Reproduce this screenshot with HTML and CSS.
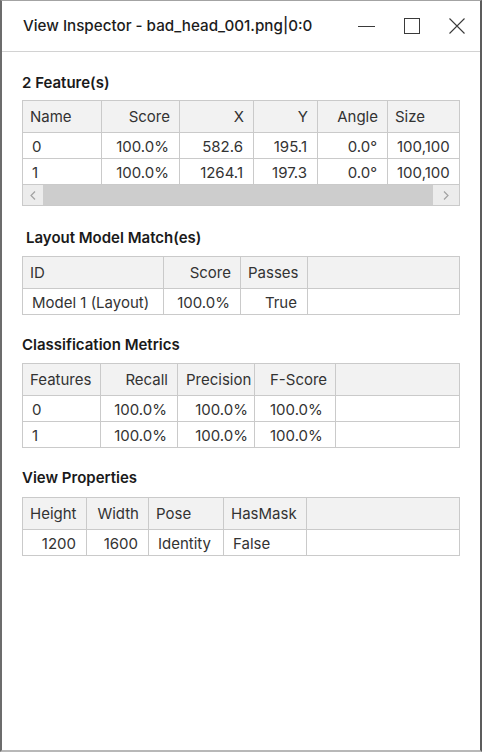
FILE: index.html
```html
<!DOCTYPE html>
<html lang="en">
<head>
<meta charset="utf-8">
<title>View Inspector</title>
<link rel="stylesheet" href="styles.css">
</head>
<body>
<div class="window">
  <header class="titlebar">
    <div class="title">View Inspector - bad_head_001.png|0:0</div>
    <div class="caption">
      <span class="cap-btn">
        <svg width="17" height="16" viewBox="0 0 17 16"><path d="M0 8.5H17" stroke="#3a3a3a" stroke-width="1" fill="none"/></svg>
      </span>
      <span class="cap-btn">
        <svg width="16" height="16" viewBox="0 0 16 16"><rect x="0.5" y="0.5" width="15" height="15" stroke="#3a3a3a" stroke-width="1" fill="none"/></svg>
      </span>
      <span class="cap-btn">
        <svg width="16" height="16" viewBox="0 0 16 16"><path d="M0.5 0.5L15.5 15.5M15.5 0.5L0.5 15.5" stroke="#3a3a3a" stroke-width="1.1" fill="none"/></svg>
      </span>
    </div>
  </header>

  <main class="content">
    <section class="section s-features">
      <h2 class="heading">2 Feature(s)</h2>
      <div class="table-wrap">
        <div class="grid g-features">
          <div class="hc">Name</div>
          <div class="hc r">Score</div>
          <div class="hc r">X</div>
          <div class="hc r">Y</div>
          <div class="hc r">Angle</div>
          <div class="hc">Size</div>

          <div class="c">0</div>
          <div class="c r">100.0%</div>
          <div class="c r">582.6</div>
          <div class="c r">195.1</div>
          <div class="c r">0.0°</div>
          <div class="c">100,100</div>

          <div class="c">1</div>
          <div class="c r">100.0%</div>
          <div class="c r">1264.1</div>
          <div class="c r">197.3</div>
          <div class="c r">0.0°</div>
          <div class="c">100,100</div>
        </div>
        <div class="hscroll">
          <span class="sb-btn">
            <svg width="6" height="9" viewBox="0 0 6 9"><path d="M5 0.5L1 4.5L5 8.5" stroke="#a2a2a2" stroke-width="1.2" fill="none"/></svg>
          </span>
          <span class="sb-thumb"></span>
          <span class="sb-btn sb-right">
            <svg width="6" height="9" viewBox="0 0 6 9"><path d="M1 0.5L5 4.5L1 8.5" stroke="#a2a2a2" stroke-width="1.2" fill="none"/></svg>
          </span>
        </div>
      </div>
    </section>

    <section class="section s-layout">
      <h2 class="heading indent">Layout Model Match(es)</h2>
      <div class="table-wrap">
        <div class="grid g-layout">
          <div class="hc">ID</div>
          <div class="hc r">Score</div>
          <div class="hc">Passes</div>
          <div class="hc"></div>

          <div class="c">Model 1 (Layout)</div>
          <div class="c r">100.0%</div>
          <div class="c r">True</div>
          <div class="c"></div>
        </div>
      </div>
    </section>

    <section class="section s-class">
      <h2 class="heading">Classification Metrics</h2>
      <div class="table-wrap">
        <div class="grid g-class">
          <div class="hc">Features</div>
          <div class="hc r">Recall</div>
          <div class="hc prec">Precision</div>
          <div class="hc fs">F-Score</div>
          <div class="hc"></div>

          <div class="c">0</div>
          <div class="c r">100.0%</div>
          <div class="c r prec-v">100.0%</div>
          <div class="c fs">100.0%</div>
          <div class="c"></div>

          <div class="c">1</div>
          <div class="c r">100.0%</div>
          <div class="c r prec-v">100.0%</div>
          <div class="c fs">100.0%</div>
          <div class="c"></div>
        </div>
      </div>
    </section>

    <section class="section s-view">
      <h2 class="heading">View Properties</h2>
      <div class="table-wrap">
        <div class="grid g-view">
          <div class="hc">Height</div>
          <div class="hc r">Width</div>
          <div class="hc">Pose</div>
          <div class="hc">HasMask</div>
          <div class="hc"></div>

          <div class="c r">1200</div>
          <div class="c r">1600</div>
          <div class="c">Identity</div>
          <div class="c">False</div>
          <div class="c"></div>
        </div>
      </div>
    </section>
  </main>
</div>
</body>
</html>
```

FILE: styles.css
```css
* {
  box-sizing: border-box;
}

html, body {
  margin: 0;
  padding: 0;
  background: #ffffff;
}

body {
  font-family: Inter, "Noto Sans", "Liberation Sans", sans-serif;
  color: #262626;
}

.window {
  width: 482px;
  height: 752px;
  background: #ffffff;
  border-top: 1px solid #a3a3a3;
  border-left: 2px solid #6c6c6c;
  border-right: 2px solid #5c5c5c;
  border-bottom: 2px solid #b8b8b8;
  display: flex;
  flex-direction: column;
}

.titlebar {
  height: 51px;
  border-bottom: 1px solid #d2d2d2;
  display: flex;
  align-items: center;
  padding: 0 1px 1px 21px;
}

.title {
  flex: 1;
  font-size: 15.2px;
  font-weight: 500;
  color: #1c1c1c;
  white-space: nowrap;
}

.caption {
  display: flex;
  align-items: center;
}

.cap-btn {
  width: 45px;
  height: 30px;
  display: flex;
  align-items: center;
  justify-content: center;
}

.cap-btn svg {
  display: block;
}

.content {
  padding: 21px 20px 0 20px;
}

.heading {
  margin: 0 0 8px 0;
  font-size: 15px;
  line-height: 20px;
  font-weight: 600;
  color: #1a1a1a;
}

.s-features .heading {
  margin-bottom: 7px;
}

.s-layout {
  margin-top: 22px;
}

.s-class {
  margin-top: 20px;
}

.s-view {
  margin-top: 20px;
}

.s-view .heading {
  margin-bottom: 9px;
}

.heading.indent {
  padding-left: 4px;
}

.table-wrap {
  border: 1px solid #cacaca;
  overflow: hidden;
  width: 438px;
}

.grid {
  display: grid;
  gap: 1px;
  background: #cacaca;
  grid-template-rows: 31px;
  grid-auto-rows: 25px;
  font-size: 15px;
}

.g-features {
  grid-template-columns: 78px 77px 73px 63px 69px 90px;
  width: 460px;
}

.g-layout {
  grid-template-columns: 140px 76px 66px 151px;
}

.g-class {
  grid-template-columns: 77px 76px 76px 80px 123px;
}

.g-view {
  grid-template-columns: 63px 61px 74px 82px 152px;
}

.hc, .c {
  display: flex;
  align-items: center;
  white-space: nowrap;
  color: #333333;
}

.hc {
  background: #f2f2f2;
  padding-left: 7px;
  padding-right: 9px;
}

.c {
  background: #ffffff;
  padding-left: 9px;
  padding-right: 10px;
  padding-top: 1px;
}

.r {
  justify-content: flex-end;
}

.hc.prec {
  padding-left: 8px;
}

.c.prec-v {
  padding-right: 6px;
}

.fs {
  padding-left: 15px;
}

.hscroll {
  display: flex;
  height: 21px;
  border-top: 1px solid #cacaca;
  background: #ececec;
}

.sb-btn {
  width: 20px;
  display: flex;
  align-items: center;
  justify-content: center;
  background: #ececec;
}

.sb-right {
  width: 26px;
}

.sb-thumb {
  flex: 1;
  background: #cdcdcd;
}
```
